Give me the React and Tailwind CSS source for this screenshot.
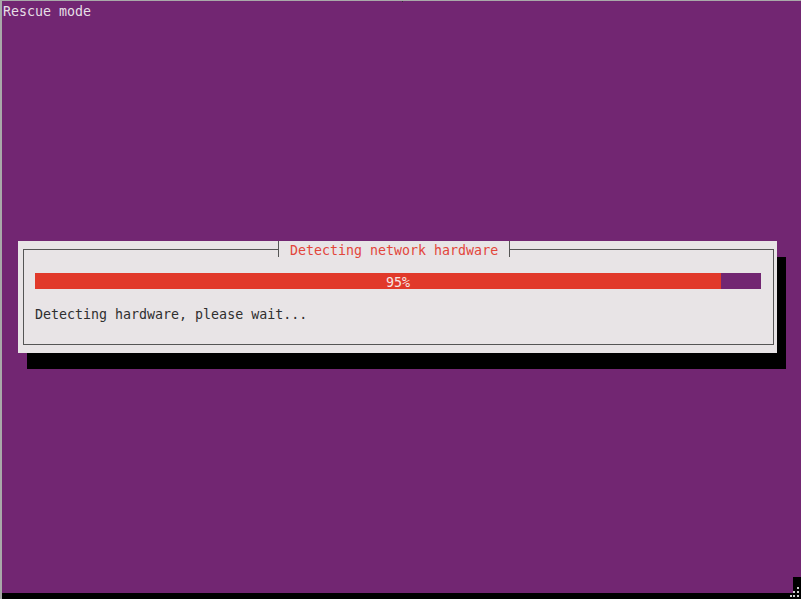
export default function App() {
  const mono = { fontFamily: '"DejaVu Sans Mono", "Liberation Mono", monospace' };
  return (
    <div
      className="relative w-[801px] h-[599px] overflow-hidden bg-[#722672] border-t border-l-2 border-[#a9a9a9] flex flex-col"
      style={mono}
    >
      {/* top tick */}
      <div className="absolute top-[-1px] left-[400px] w-px h-[2px] bg-[#333]" />

      <div className="h-[19px] pl-[1px] pt-[3px] text-[13.3px] leading-[16px] text-[#e6dfe6]">
        Rescue mode
      </div>

      <div className="ml-[16px] mt-[221px] w-[759px] h-[112px] bg-[#e8e4e6] shadow-[9px_16px_0_0_#000] pt-[8px] pl-[5px] pr-[3px] pb-[8px]">
        <div className="relative h-full border border-[#555]">
          <div className="absolute left-[254px] top-[-9px] h-[16px] border-l border-r border-[#555] bg-[#e8e4e6] px-[11px] pt-[2px] text-[13.3px] leading-[16px] text-[#e2463b] whitespace-nowrap overflow-visible">
            Detecting network hardware
          </div>
          <div className="ml-[11px] mt-[23px] w-[726px] h-[16px] bg-[#722672] relative flex">
            <div className="w-[686px] h-full bg-[#e1392a]" />
            <div className="absolute inset-0 flex items-center justify-center pt-[3px] text-[13.3px] leading-[16px] text-[#f6e6e4]">
              95%
            </div>
          </div>
          <div className="ml-[11px] mt-[18px] text-[13.3px] leading-[16px] text-[#2f2f2f] whitespace-nowrap">
            Detecting hardware, please wait...
          </div>
        </div>
      </div>

      <div className="mt-auto h-[6px] bg-black -ml-[2px]" />

      {/* resize grip corner */}
      <div className="absolute right-0 bottom-[6px] w-[8px] h-[16px] bg-black" />
      <svg className="absolute right-0 bottom-0" width="12" height="13" viewBox="0 0 12 13">
        <rect x="8" y="1" width="2" height="2" fill="#cfcfcf" />
        <rect x="4" y="5" width="2" height="2" fill="#cfcfcf" />
        <rect x="8" y="5" width="2" height="2" fill="#cfcfcf" />
        <rect x="1" y="9" width="2" height="2" fill="#cfcfcf" />
        <rect x="4" y="9" width="2" height="2" fill="#cfcfcf" />
        <rect x="8" y="9" width="2" height="2" fill="#cfcfcf" />
      </svg>
    </div>
  );
}
